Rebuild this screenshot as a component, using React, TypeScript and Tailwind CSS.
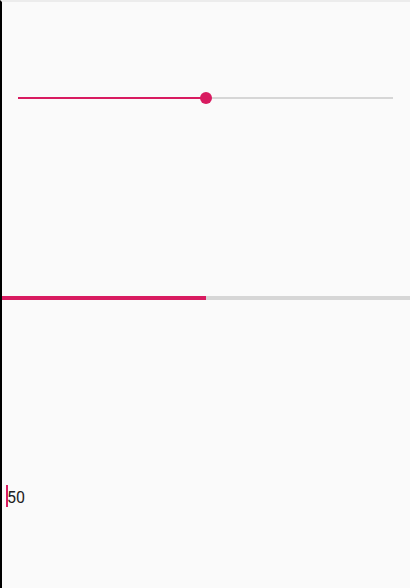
export default function App() {
  const value = 50;

  return (
    <div
      className="h-[588px] w-[410px] bg-[#fafafa] border-l-2 border-black border-t-2 border-t-[#ececec] flex flex-col"
      style={{ fontFamily: "Roboto, 'Liberation Sans', sans-serif" }}
    >
      {/* Slider */}
      <div className="pt-[95px] pl-[16px] w-[391px]">
        <div className="relative h-[2px] bg-[#d6d6d6]">
          <div className="absolute left-0 top-0 h-[2px] bg-[#d81b60]" style={{ width: `${value}%` }}></div>
          <div
            className="absolute top-[-5px] w-[12px] h-[12px] -ml-[6px] rounded-full bg-[#d81b60]"
            style={{ left: `${value}%` }}
          ></div>
        </div>
      </div>

      {/* Linear progress */}
      <div className="mt-[197px] h-[4px] bg-[#d6d6d6] flex">
        <div className="h-full bg-[#d81b60]" style={{ width: `${value}%` }}></div>
      </div>

      {/* Text field */}
      <div className="mt-[185px] pl-[4px] flex items-start h-[22px]">
        <div className="w-[2px] h-[22px] bg-[#d81b60]"></div>
        <span className="text-[16px] leading-[22px] pt-[2px] text-[#212121] -ml-[1px]">{value}</span>
      </div>
    </div>
  );
}
